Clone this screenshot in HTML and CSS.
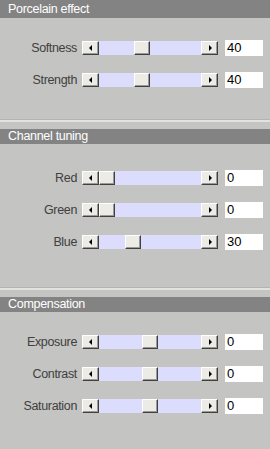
FILE: index.html
```html
<!DOCTYPE html>
<html lang="en">
<head>
    <meta charset="UTF-8">
    <title>Porcelain</title>
    <link rel="stylesheet" href="styles.css">
</head>
<body>
    <!-- Porcelain effect -->
    <div class="panel first">
        <div class="head">Porcelain effect</div>
        <div class="rows">
            <div class="row">
                <span class="label">Softness</span>
                <div class="scroll">
                    <span class="btn left"></span>
                    <span class="track"><span class="thumb" style="margin-left: 35px"></span></span>
                    <span class="btn right"></span>
                </div>
                <span class="value">40</span>
            </div>
            <div class="row">
                <span class="label">Strength</span>
                <div class="scroll">
                    <span class="btn left"></span>
                    <span class="track"><span class="thumb" style="margin-left: 35px"></span></span>
                    <span class="btn right"></span>
                </div>
                <span class="value">40</span>
            </div>
        </div>
    </div>

    <!-- Channel tuning -->
    <div class="panel second">
        <div class="head">Channel tuning</div>
        <div class="rows">
            <div class="row">
                <span class="label">Red</span>
                <div class="scroll">
                    <span class="btn left"></span>
                    <span class="track"><span class="thumb" style="margin-left: 0px"></span></span>
                    <span class="btn right"></span>
                </div>
                <span class="value">0</span>
            </div>
            <div class="row">
                <span class="label">Green</span>
                <div class="scroll">
                    <span class="btn left"></span>
                    <span class="track"><span class="thumb" style="margin-left: 0px"></span></span>
                    <span class="btn right"></span>
                </div>
                <span class="value">0</span>
            </div>
            <div class="row">
                <span class="label">Blue</span>
                <div class="scroll">
                    <span class="btn left"></span>
                    <span class="track"><span class="thumb" style="margin-left: 26px"></span></span>
                    <span class="btn right"></span>
                </div>
                <span class="value">30</span>
            </div>
        </div>
    </div>

    <!-- Compensation -->
    <div class="panel third">
        <div class="head">Compensation</div>
        <div class="rows">
            <div class="row">
                <span class="label">Exposure</span>
                <div class="scroll">
                    <span class="btn left"></span>
                    <span class="track"><span class="thumb" style="margin-left: 43px"></span></span>
                    <span class="btn right"></span>
                </div>
                <span class="value">0</span>
            </div>
            <div class="row">
                <span class="label">Contrast</span>
                <div class="scroll">
                    <span class="btn left"></span>
                    <span class="track"><span class="thumb" style="margin-left: 43px"></span></span>
                    <span class="btn right"></span>
                </div>
                <span class="value">0</span>
            </div>
            <div class="row">
                <span class="label">Saturation</span>
                <div class="scroll">
                    <span class="btn left"></span>
                    <span class="track"><span class="thumb" style="margin-left: 43px"></span></span>
                    <span class="btn right"></span>
                </div>
                <span class="value">0</span>
            </div>
        </div>
    </div>
</body>
</html>
```

FILE: styles.css
```css
body { margin: 0; background: #c4c4c2; font-family: "Liberation Sans", Arial, sans-serif; width: 270px; height: 449px; overflow: hidden; }
.panel { border-bottom: 1px solid #b4b4b2; box-shadow: 0 2px 0 #e2e2e0; }
.panel.first { height: 119px; }
.panel.second { height: 158px; margin-top: 9px; }
.panel.third { margin-top: 9px; border-bottom: none; box-shadow: none; }
.head { background: #838383; color: #fff; font-size: 12.5px; letter-spacing: -0.3px; height: 15px; line-height: 15px; padding-left: 8px; }
.first .head { height: 18px; line-height: 18px; }
.rows { padding-top: 14px; }
.second .rows { padding-top: 18px; }
.row { display: flex; align-items: center; height: 32px; }
.label { width: 82px; text-align: right; padding-right: 5px; box-sizing: border-box; font-size: 12.5px; letter-spacing: -0.35px; color: #404040; }
.scroll { display: flex; width: 136px; height: 14px; }
.btn, .thumb { box-sizing: border-box; width: 17px; height: 14px; background: #ecebe6; border-top: 1px solid #fff; border-left: 1px solid #fff; border-right: 1px solid #404040; border-bottom: 1px solid #404040; box-shadow: inset -1px -1px 0 #9a9a98; position: relative; }
.thumb { display: block; width: 16px; }
.btn::after { content: ""; position: absolute; top: 3px; left: 6px; border-top: 3px solid transparent; border-bottom: 3px solid transparent; }
.btn.left::after { border-right: 3px solid #000; }
.btn.right::after { border-left: 3px solid #000; left: 7px; }
.track { flex: 1; background: #dcdcfc; display: flex; }
.value { margin-left: 7px; width: 38px; height: 16px; background: #fff; font-size: 13px; line-height: 16px; padding-left: 2px; box-sizing: border-box; color: #000; }
```
